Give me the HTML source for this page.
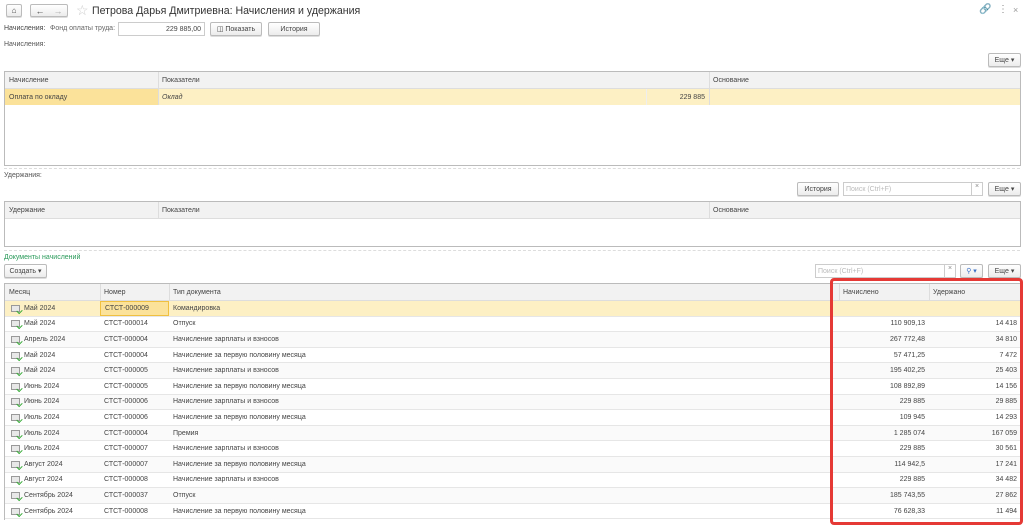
<!DOCTYPE html>
<html><head><meta charset="utf-8">
<style>
*{box-sizing:border-box;margin:0;padding:0}
body{width:1024px;height:527px;background:#fff;font-family:"Liberation Sans",Arial,sans-serif;font-size:7px;color:#444;position:relative;overflow:hidden}
.a{position:absolute;white-space:nowrap}
.btn{position:absolute;border:1px solid #bbb;border-radius:2px;background:linear-gradient(#fff,#ececec);color:#444;font-size:7px;display:flex;align-items:center;justify-content:center;box-shadow:0 1px 0 #ddd}
.inp{position:absolute;border:1px solid #ccc;background:#fff;font-size:7px;display:flex;align-items:center}
.tbl{position:absolute;border:1px solid #bbb;background:#fff}
.hdr{position:absolute;left:0;right:0;top:0;height:17px;background:#f2f2f2;border-bottom:1px solid #ddd}
.c{position:absolute;top:0;height:100%;display:flex;align-items:center;padding-left:4px;white-space:nowrap}
.r{justify-content:flex-end;padding-right:4px;padding-left:0}
.vl{position:absolute;top:0;width:1px;background:#ddd}
.row{position:absolute;left:0;right:0;height:15.5px;border-bottom:1px solid #e6e6e6}
.ic{display:inline-block;width:9px;height:7px;border:1px solid #999;background:#e8e8e8;margin-right:4px;position:relative}
.ic:after{content:"";position:absolute;right:-3px;bottom:-2px;width:4px;height:3px;border-left:1.5px solid #3a3;border-bottom:1.5px solid #3a3;transform:rotate(-45deg)}
.dash{position:absolute;left:4px;right:4px;height:0;border-top:1px dashed #ddd}
</style></head><body>

<div class="btn" style="left:6px;top:4px;width:16px;height:13px;font-size:8px">&#8962;</div>
<div class="btn" style="left:30px;top:4px;width:38px;height:13px;justify-content:space-around;font-size:9px"><span>&#8592;</span><span style="color:#aaa">&#8594;</span></div>
<div class="a" style="left:76px;top:2px;font-size:14px;color:#ccc">&#9734;</div>
<div class="a" style="left:92px;top:5px;font-size:10.6px;color:#333">Петрова Дарья Дмитриевна: Начисления и удержания</div>
<div class="a" style="left:979px;top:4px;font-size:10px;color:#999">&#128279;</div>
<div class="a" style="left:998px;top:4px;font-size:10px;color:#888">&#8942;</div>
<div class="a" style="left:1013px;top:5px;font-size:9px;color:#999">×</div>

<div class="a" style="left:4px;top:25px">Начисления:</div>
<div class="a" style="left:50px;top:25px;color:#666">Фонд оплаты труда:</div>
<div class="inp" style="left:118px;top:22px;width:87px;height:14px;justify-content:flex-end;padding-right:3px">229 885,00</div>
<div class="btn" style="left:210px;top:22px;width:52px;height:14px">&#9707; Показать</div>
<div class="btn" style="left:268px;top:22px;width:52px;height:14px">История</div>

<div class="a" style="left:4px;top:41px;color:#555">Начисления:</div>
<div class="btn" style="left:988px;top:53px;width:33px;height:14px">Еще ▾</div>

<div class="tbl" style="left:4px;top:71px;width:1017px;height:95px">
 <div class="hdr"><div class="c" style="left:0">Начисление</div><div class="c" style="left:153px">Показатели</div><div class="c" style="left:704px">Основание</div></div>
 <div class="row" style="top:17px;height:16px;background:#fdf0c4;border:none">
  <div class="c" style="left:0;width:153px;background:#fbe29a">Оплата по окладу</div>
  <div class="c" style="left:153px;font-style:italic">Оклад</div>
  <div class="c r" style="left:641px;width:63px;border-left:1px solid #eee">229 885</div>
 </div>
 <div class="vl" style="left:153px;height:33px"></div><div class="vl" style="left:704px;height:33px"></div>
</div>
<div class="dash" style="top:168px"></div>

<div class="a" style="left:4px;top:172px;color:#555">Удержания:</div>
<div class="btn" style="left:797px;top:182px;width:42px;height:14px">История</div>
<div class="inp" style="left:843px;top:182px;width:140px;height:14px;color:#bbb;padding-left:2px">Поиск (Ctrl+F)<span style="position:absolute;right:0;width:11px;height:12px;border-left:1px solid #ccc;text-align:center;color:#888">×</span></div>
<div class="btn" style="left:988px;top:182px;width:33px;height:14px">Еще ▾</div>

<div class="tbl" style="left:4px;top:201px;width:1017px;height:46px">
 <div class="hdr"><div class="c" style="left:0">Удержание</div><div class="c" style="left:153px">Показатели</div><div class="c" style="left:704px">Основание</div></div>
 <div class="vl" style="left:153px;height:17px"></div><div class="vl" style="left:704px;height:17px"></div>
</div>
<div class="dash" style="top:250px"></div>

<div class="a" style="left:4px;top:254px;color:#2a9a5a">Документы начислений</div>
<div class="btn" style="left:4px;top:264px;width:43px;height:14px">Создать ▾</div>
<div class="inp" style="left:815px;top:264px;width:141px;height:14px;color:#bbb;padding-left:2px">Поиск (Ctrl+F)<span style="position:absolute;right:0;width:11px;height:12px;border-left:1px solid #ccc;text-align:center;color:#888">×</span></div>
<div class="btn" style="left:960px;top:264px;width:23px;height:14px;color:#3a6fc4">&#9906; ▾</div>
<div class="btn" style="left:988px;top:264px;width:33px;height:14px">Еще ▾</div>

<div class="tbl" style="left:4px;top:283px;width:1017px;height:237px;border-bottom:none">
 <div class="hdr"><div class="c" style="left:0">Месяц</div><div class="c" style="left:95px">Номер</div><div class="c" style="left:164px">Тип документа</div><div class="c" style="left:834px">Начислено</div><div class="c" style="left:924px">Удержано</div></div>
 <div class="vl" style="left:95px;height:17px"></div><div class="vl" style="left:164px;height:17px"></div><div class="vl" style="left:834px;height:17px"></div><div class="vl" style="left:924px;height:17px"></div>
 <div id="rows"></div>
</div>

<div class="a" style="left:830px;top:278px;width:193px;height:247px;border:3px solid #e53935;border-radius:4px"></div>

<script>
var d=[["Май 2024","СТСТ-000009","Командировка","",""],
["Май 2024","СТСТ-000014","Отпуск","110 909,13","14 418"],
["Апрель 2024","СТСТ-000004","Начисление зарплаты и взносов","267 772,48","34 810"],
["Май 2024","СТСТ-000004","Начисление за первую половину месяца","57 471,25","7 472"],
["Май 2024","СТСТ-000005","Начисление зарплаты и взносов","195 402,25","25 403"],
["Июнь 2024","СТСТ-000005","Начисление за первую половину месяца","108 892,89","14 156"],
["Июнь 2024","СТСТ-000006","Начисление зарплаты и взносов","229 885","29 885"],
["Июль 2024","СТСТ-000006","Начисление за первую половину месяца","109 945","14 293"],
["Июль 2024","СТСТ-000004","Премия","1 285 074","167 059"],
["Июль 2024","СТСТ-000007","Начисление зарплаты и взносов","229 885","30 561"],
["Август 2024","СТСТ-000007","Начисление за первую половину месяца","114 942,5","17 241"],
["Август 2024","СТСТ-000008","Начисление зарплаты и взносов","229 885","34 482"],
["Сентябрь 2024","СТСТ-000037","Отпуск","185 743,55","27 862"],
["Сентябрь 2024","СТСТ-000008","Начисление за первую половину месяца","76 628,33","11 494"]];
var h="";
d.forEach(function(r,i){
 var top=17+i*15.6;
 var bg=i==0?"#fdf0c4":(i%2?"#fff":"#fafafa");
 h+='<div class="row" style="top:'+top+'px;background:'+bg+'">'+
 '<div class="c" style="left:0;padding-left:6px"><span class="ic"></span>'+r[0]+'</div>'+
 '<div class="c" style="left:95px;width:69px;'+(i==0?'border:1.5px solid #f0c040;background:#fbe29a':'')+'">'+r[1]+'</div>'+
 '<div class="c" style="left:164px">'+r[2]+'</div>'+
 '<div class="c r" style="left:834px;width:90px">'+r[3]+'</div>'+
 '<div class="c r" style="left:924px;width:92px">'+r[4]+'</div></div>';
});
document.getElementById("rows").innerHTML=h;
</script>
</body></html>
